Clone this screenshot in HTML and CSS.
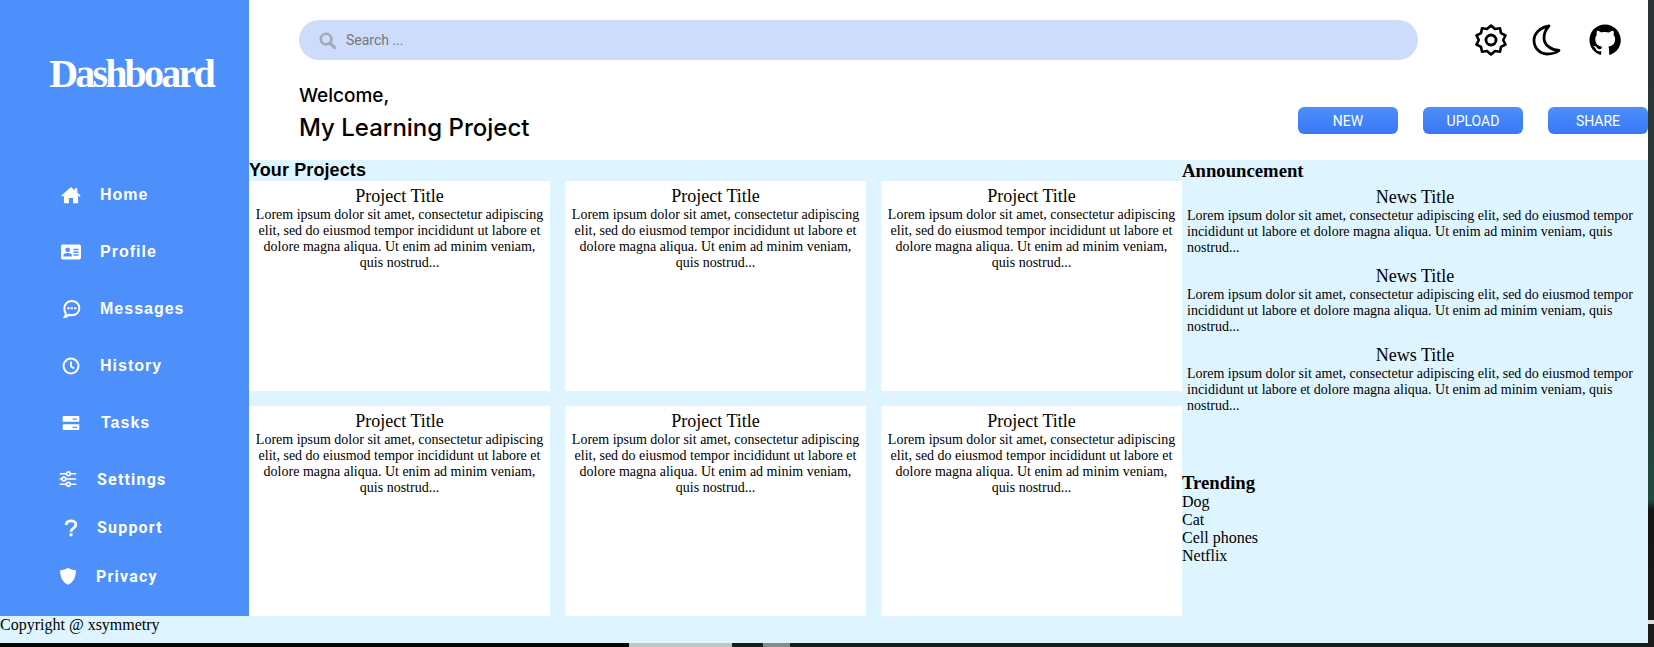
FILE: index.html
```html
<!DOCTYPE html>
<html lang="en">
<head>
    <meta charset="UTF-8">
    <meta name="viewport" content="width=device-width, initial-scale=1.0">
    <title>Dashboard</title>
    <link rel="stylesheet" href="styles.css">
</head>
<body>
    <div class="page">
        <div class="layout">
            <aside class="sidebar">
                <h1 class="logo">Dashboard</h1>
                <ul class="nav">
                    <li class="nav-item">
                        <svg class="nav-icon" viewBox="0 0 24 24"><path fill="currentColor" d="M12 2.5 0.5 12.6l1.3 1.5L3.5 12.7V22h6v-6.5h5V22h6v-9.3l1.7 1.4 1.3-1.5-4-3.5V4h-3v2.6z"/></svg>
                        <span>Home</span>
                    </li>
                    <li class="nav-item">
                        <svg class="nav-icon" viewBox="0 0 24 24"><path fill="currentColor" fill-rule="evenodd" d="M2 3h20a2 2 0 0 1 2 2v14a2 2 0 0 1-2 2H2a2 2 0 0 1-2-2V5a2 2 0 0 1 2-2zm6 3.500a2.800 2.800 0 1 0 0 5.600 2.800 2.800 0 0 0 0-5.600zM3 17.500h10v-1.500c0-1.800-2.200-2.800-5-2.800s-5 1-5 2.800zM15 8v1.800h6V8zm0 3.400v1.800h6v-1.800zm0 3.400v1.800h6v-1.800z"/></svg>
                        <span>Profile</span>
                    </li>
                    <li class="nav-item">
                        <svg class="nav-icon" viewBox="0 0 24 24"><path fill="none" stroke="currentColor" stroke-width="2.400" d="M13 2.500c5 0 9 3.600 9 8.500s-4 8.500-9 8.500c-1.300 0-2.500-.2-3.600-.6C8 20.500 6.500 21.500 4.500 21.500c.8-1.200 1.300-2.600 1.300-4.200C4.600 15.800 4 13.500 4 11c0-4.900 4-8.500 9-8.500z"/><circle cx="9" cy="11" r="1.400" fill="currentColor"/><circle cx="13" cy="11" r="1.400" fill="currentColor"/><circle cx="17" cy="11" r="1.400" fill="currentColor"/></svg>
                        <span>Messages</span>
                    </li>
                    <li class="nav-item">
                        <svg class="nav-icon" viewBox="0 0 24 24"><circle cx="12" cy="12" r="9" fill="none" stroke="currentColor" stroke-width="2.400"/><path fill="none" stroke="currentColor" stroke-width="2.200" d="M12 6.500v6l4 2.400"/></svg>
                        <span>History</span>
                    </li>
                    <li class="nav-item nav-item-tasks">
                        <svg class="nav-icon" viewBox="0 0 24 24"><path fill="currentColor" fill-rule="evenodd" d="M3 3.500h18a1 1 0 0 1 1 1v5a1 1 0 0 1-1 1H3a1 1 0 0 1-1-1v-5a1 1 0 0 1 1-1zm11 3v1.500h5V6.500zM3 13.500h18a1 1 0 0 1 1 1v5a1 1 0 0 1-1 1H3a1 1 0 0 1-1-1v-5a1 1 0 0 1 1-1zm11 3V18h5v-1.500z"/></svg>
                        <span>Tasks</span>
                    </li>
                    <li class="nav-item nav-item-small nav-item-settings">
                        <svg class="nav-icon" viewBox="0 0 24 24"><path fill="none" stroke="currentColor" stroke-width="2.200" d="M1 5h9m5 0h8M1 12h3m5 0h14M1 19h9m5 0h8"/><circle cx="12.500" cy="5" r="2.500" fill="none" stroke="currentColor" stroke-width="2.200"/><circle cx="6.500" cy="12" r="2.500" fill="none" stroke="currentColor" stroke-width="2.200"/><circle cx="12.500" cy="19" r="2.500" fill="none" stroke="currentColor" stroke-width="2.200"/></svg>
                        <span>Settings</span>
                    </li>
                    <li class="nav-item nav-item-small nav-item-support">
                        <svg class="nav-icon" viewBox="0 0 24 24"><path fill="none" stroke="currentColor" stroke-width="3.800" d="M5.500 8c0-3.500 2.900-5.500 6.500-5.500s6.500 2 6.500 5.200c0 4.600-6.500 4.400-6.500 9.300"/><rect x="10" y="19" width="4" height="4" fill="currentColor"/></svg>
                        <span>Support</span>
                    </li>
                    <li class="nav-item nav-item-small nav-item-privacy">
                        <svg class="nav-icon" viewBox="0 0 24 24"><path fill="currentColor" d="M12 1c3 1.800 6.500 3 10.500 3.200C22.500 14 19 20.500 12 23.500 5 20.500 1.500 14 1.500 4.200 5.500 4 9 2.800 12 1z"/></svg>
                        <span>Privacy</span>
                    </li>
                </ul>
            </aside>

            <main class="main">
                <header class="header">
                    <div class="topbar">
                        <div class="search">
                            <svg class="search-icon" viewBox="0 0 24 24"><circle cx="10" cy="10" r="7.500" fill="none" stroke="currentColor" stroke-width="3.800"/><path stroke="currentColor" stroke-width="4.400" stroke-linecap="round" d="M16 16l6 6"/></svg>
                            <span>Search ...</span>
                        </div>
                        <div class="top-icons">
                            <svg class="top-icon" viewBox="0 0 32 32"><path fill="none" stroke="#000" stroke-width="2.600" stroke-linejoin="round" d="M16 1.500l4 3.500 5-.8 1 5 4.500 2.300-2.300 4.500 2.300 4.500-4.500 2.300-1 5-5-.8-4 3.500-4-3.500-5 .8-1-5-4.500-2.300 2.300-4.500-2.300-4.500 4.500-2.300 1-5 5 .8z"/><circle cx="16" cy="16" r="5" fill="none" stroke="#000" stroke-width="2.800"/></svg>
                            <svg class="top-icon" viewBox="0 0 32 32"><path fill="none" stroke="#000" stroke-width="2.800" stroke-linejoin="round" d="M18 2C10 3 3 9 3 16.500 3 24 9 30 16 30c5 0 9-1 12-3.500C20 26 13 21 13 14 13 9 15 5 18 2z"/></svg>
                            <svg class="top-icon top-icon-github" viewBox="0 0 32 32"><path fill="#000" d="M16 .5C7.200.5.500 7.400.500 16c0 6.900 4.400 12.700 10.600 14.800.8.100 1.100-.3 1.100-.8v-2.800c-4.300.9-5.200-2-5.200-2-.7-1.800-1.700-2.300-1.700-2.300-1.400-1 .1-1 .1-1 1.600.1 2.400 1.600 2.400 1.600 1.400 2.400 3.600 1.700 4.500 1.300.1-1 .5-1.700 1-2.100-3.400-.4-7-1.700-7-7.600 0-1.700.6-3 1.600-4.100-.2-.4-.7-2 .1-4.100 0 0 1.300-.4 4.300 1.600 1.200-.4 2.600-.5 3.900-.5s2.700.2 3.900.5c3-2 4.300-1.600 4.300-1.600.8 2.100.3 3.700.1 4.100 1 1.100 1.600 2.400 1.600 4.100 0 5.900-3.600 7.200-7 7.600.6.500 1 1.400 1 2.900V30c0 .4.300.9 1.100.8 6.200-2.100 10.600-7.900 10.600-14.800C31.500 7.400 24.800.5 16 .5z"/></svg>
                        </div>
                    </div>
                    <div class="titlebar">
                        <div class="welcome">
                            <p class="welcome-small">Welcome,</p>
                            <p class="welcome-title">My Learning Project</p>
                        </div>
                        <div class="actions">
                            <button class="btn">NEW</button>
                            <button class="btn">UPLOAD</button>
                            <button class="btn">SHARE</button>
                        </div>
                    </div>
                </header>

                <div class="content">
                    <section class="projects">
                        <h2 class="projects-heading">Your Projects</h2>
                        <div class="project-grid">
                            <article class="card">
                                <h3>Project Title</h3>
                                <p>Lorem ipsum dolor sit amet, consectetur adipiscing elit, sed do eiusmod tempor incididunt ut labore et dolore magna aliqua. Ut enim ad minim veniam, quis nostrud...</p>
                            </article>
                            <article class="card">
                                <h3>Project Title</h3>
                                <p>Lorem ipsum dolor sit amet, consectetur adipiscing elit, sed do eiusmod tempor incididunt ut labore et dolore magna aliqua. Ut enim ad minim veniam, quis nostrud...</p>
                            </article>
                            <article class="card">
                                <h3>Project Title</h3>
                                <p>Lorem ipsum dolor sit amet, consectetur adipiscing elit, sed do eiusmod tempor incididunt ut labore et dolore magna aliqua. Ut enim ad minim veniam, quis nostrud...</p>
                            </article>
                            <article class="card">
                                <h3>Project Title</h3>
                                <p>Lorem ipsum dolor sit amet, consectetur adipiscing elit, sed do eiusmod tempor incididunt ut labore et dolore magna aliqua. Ut enim ad minim veniam, quis nostrud...</p>
                            </article>
                            <article class="card">
                                <h3>Project Title</h3>
                                <p>Lorem ipsum dolor sit amet, consectetur adipiscing elit, sed do eiusmod tempor incididunt ut labore et dolore magna aliqua. Ut enim ad minim veniam, quis nostrud...</p>
                            </article>
                            <article class="card">
                                <h3>Project Title</h3>
                                <p>Lorem ipsum dolor sit amet, consectetur adipiscing elit, sed do eiusmod tempor incididunt ut labore et dolore magna aliqua. Ut enim ad minim veniam, quis nostrud...</p>
                            </article>
                        </div>
                    </section>

                    <section class="side">
                        <h2 class="side-heading">Announcement</h2>
                        <div class="news">
                            <article class="news-item">
                                <h3>News Title</h3>
                                <p>Lorem ipsum dolor sit amet, consectetur adipiscing elit, sed do eiusmod tempor incididunt ut labore et dolore magna aliqua. Ut enim ad minim veniam, quis nostrud...</p>
                            </article>
                            <article class="news-item">
                                <h3>News Title</h3>
                                <p>Lorem ipsum dolor sit amet, consectetur adipiscing elit, sed do eiusmod tempor incididunt ut labore et dolore magna aliqua. Ut enim ad minim veniam, quis nostrud...</p>
                            </article>
                            <article class="news-item">
                                <h3>News Title</h3>
                                <p>Lorem ipsum dolor sit amet, consectetur adipiscing elit, sed do eiusmod tempor incididunt ut labore et dolore magna aliqua. Ut enim ad minim veniam, quis nostrud...</p>
                            </article>
                        </div>
                        <h2 class="side-heading">Trending</h2>
                        <ul class="trending">
                            <li>Dog</li>
                            <li>Cat</li>
                            <li>Cell phones</li>
                            <li>Netflix</li>
                        </ul>
                    </section>
                </div>
            </main>
        </div>
        <footer class="footer">Copyright @ xsymmetry</footer>
    </div>
    <div class="backdrop"></div>
</body>
</html>
```

FILE: styles.css
```css
* {
    margin: 0;
    padding: 0;
    box-sizing: border-box;
}

html, body {
    height: 647px;
    overflow: hidden;
}

/* the window behind the page shows at the bottom and right edges */
body {
    display: flex;
    background: linear-gradient(90deg, #050505 0 629px, #c4c4c4 629px 732px, #1a1a1a 732px 763px, #8a8a8a 763px 790px, #1a1a1a 790px);
    font-family: "Liberation Serif", serif;
    color: #000;
}

.page {
    width: 1648px;
    height: 643px;
    flex-shrink: 0;
    background-color: #def5ff;
}

.backdrop {
    flex: 1;
    background: linear-gradient(180deg, #2b3533 0, #2b3a38 390px, #1f4a3e 500px, #141414 510px, #1b1b1b 620px, #ddd 620px, #ddd 624px, #1b1b1b 624px);
}

.layout {
    display: flex;
    height: 616px;
}

/* Sidebar */
.sidebar {
    width: 249px;
    flex-shrink: 0;
    background-color: #4d8ffb;
    color: #fff;
}

.logo {
    padding: 50px 0 0 13px;
    height: 166px;
    text-align: center;
    font-size: 40px;
    font-weight: bold;
    letter-spacing: -2.8px;
    line-height: 48px;
}

.nav {
    list-style: none;
}

.nav-item {
    display: flex;
    align-items: center;
    height: 57px;
    padding-left: 61px;
    font-family: "Liberation Sans", sans-serif;
    font-size: 16px;
    font-weight: bold;
    letter-spacing: 1px;
}

.nav-icon {
    width: 20px;
    height: 20px;
    margin-right: 19px;
}

.nav-item-tasks span {
    margin-left: 1px;
}

.nav-item-small {
    padding-left: 59px;
    font-family: Roboto, sans-serif;
    font-weight: bold;
    letter-spacing: 1.2px;
    height: 48.5px;
}

.nav-item-small .nav-icon {
    width: 18px;
    height: 18px;
    margin-right: 20px;
}

.nav-item-settings {
    margin-top: 4px;
}

.nav-item-support .nav-icon {
    margin-left: 3px;
    margin-right: 17px;
}

.nav-item-privacy .nav-icon {
    margin-right: 19px;
}

/* Header */
.main {
    flex: 1;
    display: flex;
    flex-direction: column;
}

.header {
    height: 160px;
    background-color: #fff;
    padding-top: 20px;
}

.topbar {
    display: flex;
    align-items: center;
    padding-left: 50px;
}

.search {
    display: flex;
    align-items: center;
    gap: 10px;
    width: 1119px;
    height: 40px;
    padding-left: 20px;
    border-radius: 20px;
    background-color: #cddcfb;
    font-family: Roboto, sans-serif;
    font-size: 14px;
    color: #777;
}

.search-icon {
    width: 17px;
    height: 17px;
    color: #a3a9b8;
}

.top-icons {
    display: flex;
    gap: 24px;
    margin-left: 57px;
}

.top-icon {
    width: 32px;
    height: 32px;
}

.top-icon-github {
    margin-left: 2px;
}

.titlebar {
    display: flex;
    justify-content: space-between;
    align-items: flex-start;
    padding-left: 50px;
}

.welcome {
    padding-top: 24px;
    font-family: Inter, sans-serif;
    font-weight: 500;
}

.welcome-small {
    font-size: 19px;
    line-height: 24px;
}

.welcome-title {
    margin-top: 5px;
    font-size: 24px;
    line-height: 30px;
}

.actions {
    display: flex;
    gap: 25px;
    padding-top: 47px;
}

.btn {
    width: 100px;
    height: 27px;
    border: none;
    border-radius: 6px;
    background: linear-gradient(180deg, #4d8ffb, #3977f5);
    color: #fff;
    font-family: Roboto, sans-serif;
    font-size: 14px;
}

/* Projects */
.content {
    flex: 1;
    display: flex;
    min-height: 0;
}

.projects {
    width: 933px;
    flex-shrink: 0;
}

.projects-heading {
    height: 21px;
    font-family: "Liberation Sans", sans-serif;
    font-size: 18px;
    letter-spacing: .1px;
    line-height: 21px;
}

.project-grid {
    display: grid;
    grid-template-columns: repeat(3, 1fr);
    grid-auto-rows: 210px;
    gap: 15px;
}

.card {
    background-color: #fff;
    padding: 5px;
    text-align: center;
    font-size: 14px;
}

.card h3, .news-item h3 {
    font-size: 18px;
    font-weight: normal;
    line-height: 21px;
}

/* Right column */
.side {
    flex: 1;
}

.side-heading {
    font-size: 18.72px;
    line-height: 21px;
}

.news {
    height: 291px;
    padding: 6px 5px 0;
}

.news-item {
    height: 79px;
    font-size: 14px;
}

.news-item h3 {
    text-align: center;
}

.trending {
    list-style: none;
    font-size: 16px;
    line-height: 18px;
}

.footer {
    font-size: 16px;
    line-height: 18px;
}
```
